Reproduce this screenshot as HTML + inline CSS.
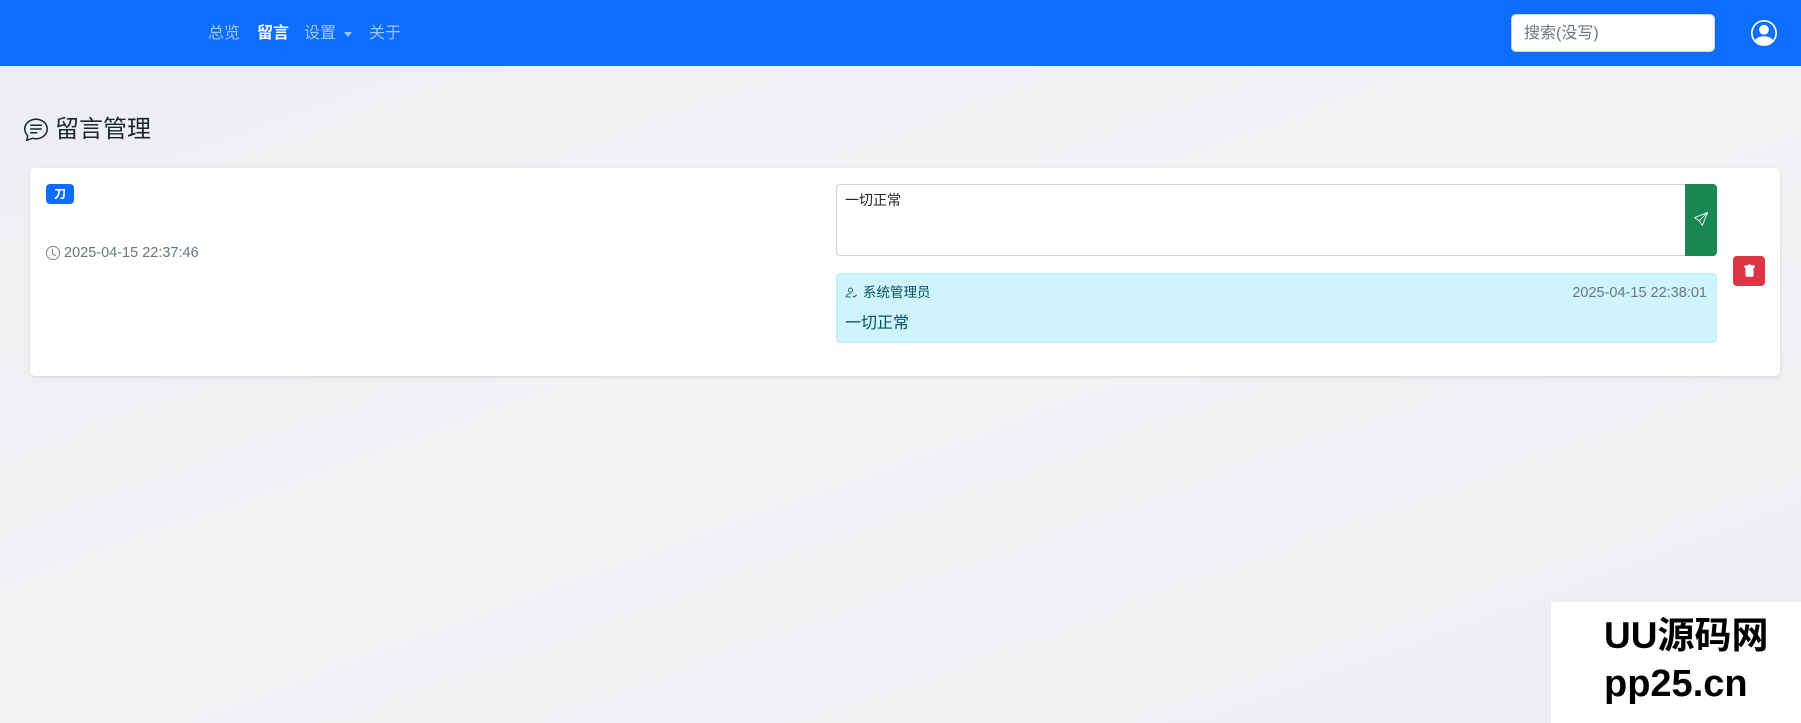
<!DOCTYPE html>
<html><head><meta charset="utf-8"><style>
*{box-sizing:border-box;margin:0;padding:0}
body{width:1801px;height:723px;overflow:hidden;font-family:"Liberation Sans","Noto Sans CJK SC",sans-serif;background:linear-gradient(160deg,#eceef1 0%,#f1f2f4 50%,#eceef1 100%);position:relative;color:#212529}
.nav{position:absolute;left:0;top:0;width:1801px;height:66px;background:#0d6efd}
.nav a{position:absolute;top:22px;font-size:16px;color:rgba(255,255,255,.6);text-decoration:none;line-height:24px}
.search{position:absolute;left:1511px;top:14px;width:204px;height:38px;background:#fff;border-radius:5px;border:1px solid #ced4da;font-size:16px;color:#6c757d;padding:9px 12px;line-height:20px}
.title{position:absolute;left:55px;top:113px;font-size:24px;line-height:34px}
.card{position:absolute;left:30px;top:168px;width:1750px;height:208px;background:#fff;border-radius:5px;box-shadow:0 1px 3px rgba(0,0,0,.12)}
.abs{position:absolute}
</style></head><body>
<div class="nav">
<a style="left:208px">总览</a>
<a style="left:257px;color:#fff;font-weight:bold">留言</a>
<a style="left:304px">设置</a>
<div class="abs" style="left:344px;top:32px;border-left:4px solid transparent;border-right:4px solid transparent;border-top:5px solid rgba(255,255,255,.6)"></div>
<a style="left:369px">关于</a>
<div class="search">搜索(没写)</div>
<svg class="abs" style="left:1751px;top:20px" width="26" height="26" viewBox="0 0 16 16" fill="#fff"><path d="M11 6a3 3 0 1 1-6 0 3 3 0 0 1 6 0"/><path fill-rule="evenodd" d="M0 8a8 8 0 1 1 16 0A8 8 0 0 1 0 8m8-7a7 7 0 0 0-5.468 11.37C3.242 11.226 4.805 10 8 10s4.757 1.225 5.468 2.37A7 7 0 0 0 8 1"/></svg>
</div>
<svg class="abs" style="left:24px;top:117px" width="24" height="24" viewBox="0 0 16 16" fill="#212529"><path d="M2.678 11.894a1 1 0 0 1 .287.801 11 11 0 0 1-.398 2c1.395-.323 2.247-.697 2.634-.893a1 1 0 0 1 .71-.074A8 8 0 0 0 8 14c3.996 0 7-2.807 7-6s-3.004-6-7-6-7 2.808-7 6c0 1.468.617 2.830 1.678 3.894m-.493 3.905a22 22 0 0 1-.713.129c-.2.032-.352-.176-.273-.362a10 10 0 0 0 .244-.637l.003-.01c.248-.72.45-1.548.524-2.319C.743 11.370 0 9.760 0 8c0-3.866 3.582-7 8-7s8 3.134 8 7-3.582 7-8 7a9 9 0 0 1-2.347-.306c-.52.263-1.639.742-3.468 1.105"/><path d="M4 5.5a.5.5 0 0 1 .5-.5h7a.5.5 0 0 1 0 1h-7a.5.5 0 0 1-.5-.5M4 8a.5.5 0 0 1 .5-.5h7a.5.5 0 0 1 0 1h-7A.5.5 0 0 1 4 8m0 2.5a.5.5 0 0 1 .5-.5h4a.5.5 0 0 1 0 1h-4a.5.5 0 0 1-.5-.5"/></svg>
<div class="title">留言管理</div>
<div class="card"></div>
<div class="abs" style="left:46px;top:184px;width:28px;height:20px;background:#0d6efd;border-radius:4px;color:#fff;font-size:12px;font-weight:bold;text-align:center;line-height:20px">刀</div>
<svg class="abs" style="left:46px;top:246px" width="14" height="14" viewBox="0 0 16 16" fill="#6c757d"><path d="M8 3.5a.5.5 0 0 0-1 0V9a.5.5 0 0 0 .252.434l3.5 2a.5.5 0 0 0 .496-.868L8 8.71z"/><path d="M8 16A8 8 0 1 0 8 0a8 8 0 0 0 0 16m7-8A7 7 0 1 1 1 8a7 7 0 0 1 14 0"/></svg>
<div class="abs" style="left:64px;top:243px;font-size:14.5px;color:#6c757d;line-height:20px">2025-04-15 22:37:46</div>
<div class="abs" style="left:836px;top:184px;width:850px;height:72px;border:1px solid #ced4da;border-radius:4px 0 0 4px;font-size:14px;padding:6px 8px;line-height:19px">一切正常</div>
<div class="abs" style="left:1685px;top:184px;width:32px;height:72px;background:#198754;border-radius:0 4px 4px 0"></div>
<svg class="abs" style="left:1694px;top:212px" width="14" height="14" viewBox="0 0 16 16" fill="#fff"><path d="M15.854.146a.5.5 0 0 1 .11.54l-5.819 14.547a.75.75 0 0 1-1.329.124l-3.178-4.995L.643 7.184a.75.75 0 0 1 .124-1.33L15.314.037a.5.5 0 0 1 .54.11ZM6.636 10.07l2.761 4.338L14.13 2.576zm6.787-8.201L1.591 6.602l4.339 2.76z"/></svg>
<div class="abs" style="left:1733px;top:256px;width:32px;height:30px;background:#dc3545;border-radius:4px"></div>
<svg class="abs" style="left:1743px;top:264px" width="13" height="14" viewBox="0 0 16 16" fill="#fff"><path d="M2.5 1a1 1 0 0 0-1 1v1a1 1 0 0 0 1 1H3v9a2 2 0 0 0 2 2h6a2 2 0 0 0 2-2V4h.5a1 1 0 0 0 1-1V2a1 1 0 0 0-1-1H10a1 1 0 0 0-1-1H7a1 1 0 0 0-1 1z"/></svg>
<div class="abs" style="left:836px;top:273px;width:881px;height:70px;background:#cff4fc;border:1px solid #b6effb;border-radius:4px"></div>
<svg class="abs" style="left:844px;top:286px" width="13" height="13" viewBox="0 0 16 16" fill="#055160"><path d="M11 5a3 3 0 1 1-6 0 3 3 0 0 1 6 0M8 7a2 2 0 1 0 0-4 2 2 0 0 0 0 4m.256 7a4.5 4.5 0 0 1-.229-1.004H3c.001-.246.154-.986.832-1.664C4.484 10.68 5.711 10 8 10q.39 0 .74.025c.226-.341.496-.65.804-.918Q8.844 9.002 8 9c-5 0-6 3-6 4s1 1 1 1zm7.5-2.5L12.5 14.5l-2-2 .7-.7 1.3 1.3 2.6-2.6z"/></svg>
<div class="abs" style="left:863px;top:284px;font-size:13.5px;color:#055160;line-height:18px">系统管理员</div>
<div class="abs" style="left:1500px;top:283px;width:207px;text-align:right;font-size:14.5px;color:#6c757d;line-height:20px">2025-04-15 22:38:01</div>
<div class="abs" style="left:845px;top:313px;font-size:16px;color:#055160;line-height:22px">一切正常</div>
<div class="abs" style="left:1551px;top:602px;width:250px;height:121px;background:#fff"></div>
<div class="abs" style="left:1604px;top:612px;font-size:37px;font-weight:bold;color:#000;line-height:48px">UU源码网</div>
<div class="abs" style="left:1604px;top:661px;font-size:38px;font-weight:bold;color:#000;line-height:46px">pp25.cn</div>
</body></html>
